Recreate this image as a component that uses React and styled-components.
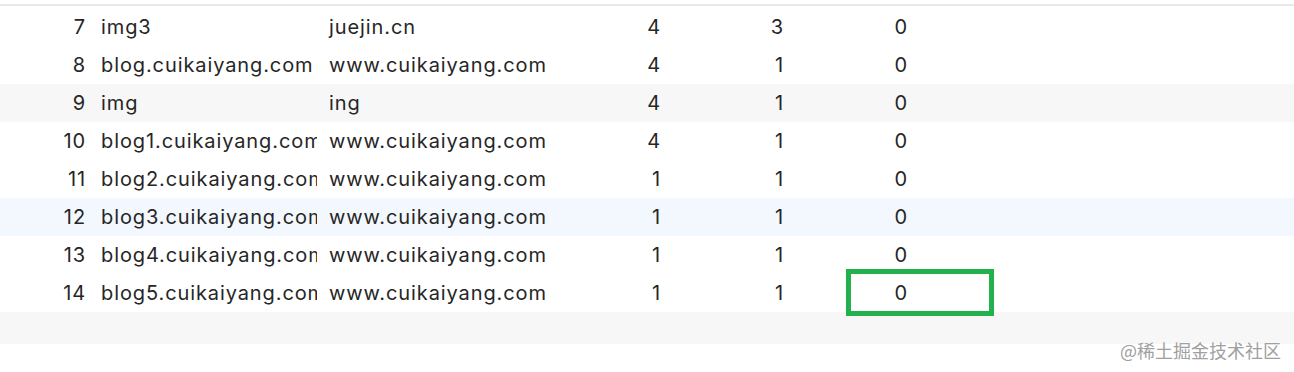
import styled, { createGlobalStyle } from 'styled-components';

const GlobalStyle = createGlobalStyle`
  html, body {
    margin: 0;
    padding: 0;
    background: #fff;
  }
  body {
    font-family: Inter, "Liberation Sans", Arial, sans-serif;
    color: #262626;
  }
`;

const rows = [
  { id: 7, host: 'img3', target: 'juejin.cn', a: 4, b: 3, c: 0 },
  { id: 8, host: 'blog.cuikaiyang.com', target: 'www.cuikaiyang.com', a: 4, b: 1, c: 0 },
  { id: 9, host: 'img', target: 'ing', a: 4, b: 1, c: 0, tone: 'stripe' },
  { id: 10, host: 'blog1.cuikaiyang.com', target: 'www.cuikaiyang.com', a: 4, b: 1, c: 0 },
  { id: 11, host: 'blog2.cuikaiyang.com', target: 'www.cuikaiyang.com', a: 1, b: 1, c: 0 },
  { id: 12, host: 'blog3.cuikaiyang.com', target: 'www.cuikaiyang.com', a: 1, b: 1, c: 0, tone: 'hover' },
  { id: 13, host: 'blog4.cuikaiyang.com', target: 'www.cuikaiyang.com', a: 1, b: 1, c: 0 },
  { id: 14, host: 'blog5.cuikaiyang.com', target: 'www.cuikaiyang.com', a: 1, b: 1, c: 0, marked: true },
];

const tones = {
  stripe: '#f7f7f7',
  hover: '#f3f8fe',
};

export default function App() {
  return (
    <>
      <GlobalStyle />
      <Page>
        <TopRule />
        <Table>
          {rows.map(r => (
            <Row key={r.id} tone={r.tone}>
              <NumCell>{r.id}</NumCell>
              <HostCell>{r.host}</HostCell>
              <TextCell>{r.target}</TextCell>
              <NumCell>{r.a}</NumCell>
              <NumCell>{r.b}</NumCell>
              <NumCell>
                {r.c}
                {r.marked && <Mark />}
              </NumCell>
              <span />
            </Row>
          ))}
          <EmptyRow />
        </Table>
        <Watermark>@稀土掘金技术社区</Watermark>
      </Page>
    </>
  );
}

const Page = styled.div`
  position: relative;
  height: 372px;
  overflow: hidden;
`;

const TopRule = styled.div`
  margin-top: 4px;
  height: 2px;
  background: #e8e8e8;
`;

const Table = styled.div`
  display: flex;
  flex-direction: column;
  padding-top: 2px;
`;

const Row = styled.div`
  display: grid;
  grid-template-columns: 92px 225px 243px 107px 123px 124px 1fr;
  align-items: center;
  height: 38px;
  font-size: 20px;
  letter-spacing: 0.9px;
  background: ${({ tone }) => tones[tone] || '#fff'};
`;

const Cell = styled.div`
  position: relative;
  white-space: nowrap;
  line-height: 24px;
`;

const NumCell = styled(Cell)`
  text-align: right;
  padding-right: 6px;
`;

/* long host names are clipped at the column edge, as in the grid */
const HostCell = styled(Cell)`
  padding-left: 9px;
  overflow: hidden;
`;

const TextCell = styled(Cell)`
  padding-left: 12px;
`;

const Mark = styled.div`
  position: absolute;
  left: 56px;
  top: -12px;
  width: 148px;
  height: 47px;
  box-sizing: border-box;
  border: 5px solid #22b14c;
`;

const EmptyRow = styled.div`
  height: 32px;
  background: #f7f7f7;
`;

const Watermark = styled.div`
  position: absolute;
  right: 13px;
  bottom: 12px;
  font-family: "Noto Sans CJK SC", sans-serif;
  font-size: 18px;
  line-height: 20px;
  color: #a0a0a0;
  text-shadow: 0 0 2px #fff;
`;
